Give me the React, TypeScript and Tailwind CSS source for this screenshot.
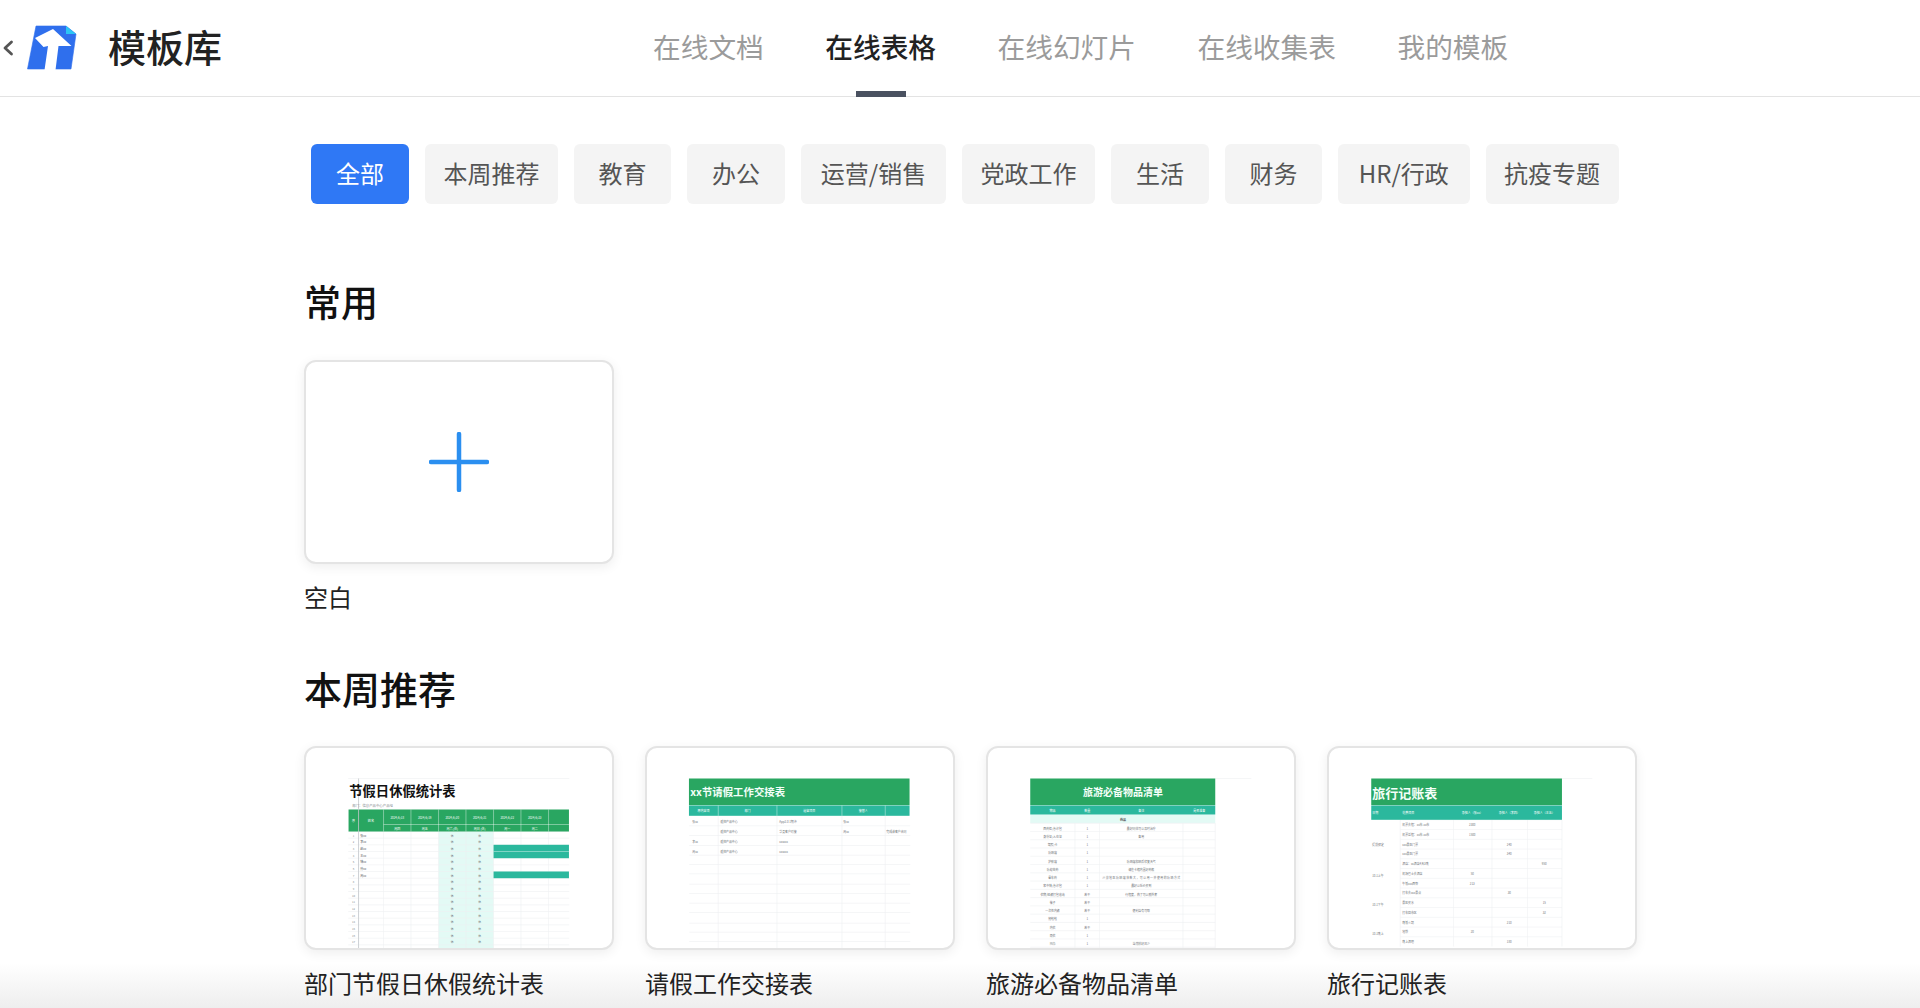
import type { ReactNode } from 'react';

const font = '[font-family:"Noto_Sans_CJK_SC","Liberation_Sans",sans-serif]';
const GREEN = '#29a661';
const TEAL = '#2bb89d';
const MINT = '#e3faf5';
const GRID = '#eef0f2';
const TINY = '#8a8f94';
const rows = (from: number, step: number, n: number) => Array.from({ length: n }, (_, i) => from + step * i);

const tabs = ['在线文档', '在线表格', '在线幻灯片', '在线收集表', '我的模板'];
const pills = [
  { label: '全部', w: 'w-[98px]' },
  { label: '本周推荐', w: 'w-[133px]' },
  { label: '教育', w: 'w-[97px]' },
  { label: '办公', w: 'w-[98px]' },
  { label: '运营/销售', w: 'w-[145px]' },
  { label: '党政工作', w: 'w-[133px]' },
  { label: '生活', w: 'w-[98px]' },
  { label: '财务', w: 'w-[97px]' },
  { label: 'HR/行政', w: 'w-[131.5px]' },
  { label: '抗疫专题', w: 'w-[133px]' },
];

function Thumb({ children }: { children: ReactNode }) {
  return (
    <svg viewBox="0 0 305 200" className="h-full w-full" style={{ fontFamily: '"Noto Sans CJK SC", sans-serif' }}>
      <g transform="translate(-2 -1.5)">{children}</g>
    </svg>
  );
}

function Lines({ xs, ys, top, bottom, x1, x2 }: { xs: number[]; ys: number[]; top: number; bottom: number; x1: number; x2: number }) {
  return (
    <g stroke={GRID} strokeWidth="0.6">
      {ys.map((y) => <line key={y} x1={x1} x2={x2} y1={y} y2={y} />)}
      {xs.map((x) => <line key={x} x1={x} x2={x} y1={top} y2={bottom} />)}
    </g>
  );
}

function HolidayThumb() {
  const cols = [79.3, 106.7, 134.3, 161.7, 189.3, 216.7, 244.3];
  const dates = ['2024/6/18', '2024/6/19', '2024/6/20', '2024/6/21', '2024/6/22', '2024/6/23', '2024/6/24'];
  const days = ['周四', '周五', '周六 (休)', '周日 (休)', '周一', '周二', '周三'];
  const names = ['张xx', '李xx', '赵xx', '王xx', '钱xx', '孙xx', '周xx'];
  const ys = rows(85, 6.67, 18);
  return (
    <Thumb>
      <line x1="44" x2="265" y1="32" y2="32" stroke={GRID} strokeWidth="0.6" />
      <rect x="134.3" y="85" width="55" height="119" fill={MINT} />
      <Lines xs={[54.3, ...cols]} ys={ys} top={85} bottom={204} x1={44} x2={265} />
      <rect x="189.3" y="98.3" width="75.4" height="13.4" fill={TEAL} />
      <rect x="189.3" y="125" width="75.4" height="6.7" fill={TEAL} />
      <line x1="189.3" x2="264.7" y1="105" y2="105" stroke="#ffffff" strokeWidth="0.4" />
      <rect x="44.3" y="63" width="220.4" height="22" fill={GREEN} />
      <line x1="54.3" x2="54.3" y1="32" y2="204" stroke="#c4c8cc" strokeWidth="0.8" />
      <text x="45" y="49" fontSize="13.3" fontWeight="700" fill="#111">节假日休假统计表</text>
      <text x="48" y="60.5" fontSize="3.4" fill={TINY}>部门：信息产品中心产品组</text>
      <text x="49.3" y="75" fontSize="3" fill="#fff" textAnchor="middle">序</text>
      <text x="66.8" y="75" fontSize="3.2" fill="#fff" textAnchor="middle">姓名</text>
      <line x1="79.3" x2="264.7" y1="78" y2="78" stroke="#fff" strokeWidth="0.4" />
      {cols.map((x, i) => (
        <g key={x}>
          <line x1={x} x2={x} y1="63" y2="85" stroke="#fff" strokeWidth="0.4" />
          {x + 13.7 < 258 && <text x={x + 13.7} y="72" fontSize="2.9" fill="#fff" textAnchor="middle">{dates[i]}</text>}
          {x + 13.7 < 258 && <text x={x + 13.7} y="83" fontSize="3" fill="#fff" textAnchor="middle">{days[i]}</text>}
        </g>
      ))}
      {/* last row is cut by the card edge, so no text in it */}
      {ys.slice(0, 17).map((y, i) => (
        <g key={y}>
          <text x="49.3" y={y + 5} fontSize="2.8" fill={TINY} textAnchor="middle">{i + 1}</text>
          {names[i] && <text x="56" y={y + 5} fontSize="3" fill="#55595d">{names[i]}</text>}
          <text x="148" y={y + 5} fontSize="2.8" fill="#6f7478" textAnchor="middle">休</text>
          <text x="175.5" y={y + 5} fontSize="2.8" fill="#6f7478" textAnchor="middle">休</text>
        </g>
      ))}
    </Thumb>
  );
}

function HandoverThumb() {
  const xs = [73, 131.7, 196.7, 240];
  const ys = [79.3, 89, 99, 108.7, 118, 127.3, 137.7, 147, 156.7, 166, 176.7, 185.7, 195];
  const heads = [['原内容项', 58.3], ['部门', 102.3], ['遗留项目', 164], ['接替人', 218]] as const;
  const data = [
    ['张xx', 47, 76.5], ['遥控产品中心', 75, 76.5], ['App2.0 1期冲', 134, 76.5], ['张xx', 198, 76.5],
    ['遥控产品中心', 75, 86.5], ['华夏客户对接', 134, 86.5], ['周xx', 198, 86.5], ['完成该客户合同', 241, 86.5],
    ['李xx', 47, 96.5], ['遥控产品中心', 75, 96.5], ['xxxxxx', 134, 96.5],
    ['周xx', 47, 106], ['遥控产品中心', 75, 106], ['xxxxxx', 134, 106],
  ] as const;
  return (
    <Thumb>
      <Lines xs={xs} ys={ys} top={69} bottom={204} x1={44} x2={265} />
      <rect x="43.7" y="32" width="220.6" height="26.7" fill={GREEN} />
      <rect x="43.7" y="59" width="220.6" height="10.3" fill={TEAL} />
      {xs.map((x) => <line key={x} x1={x} x2={x} y1="59" y2="69.3" stroke="#fff" strokeWidth="0.4" />)}
      <text x="45" y="49" fontSize="10.4" fontWeight="700" fill="#f4fff9">xx节请假工作交接表</text>
      {heads.map(([t, x]) => <text key={t} x={x} y="65.5" fontSize="3" fill="#fff" textAnchor="middle">{t}</text>)}
      {data.map(([t, x, y], i) => <text key={i} x={x} y={y} fontSize="2.9" fill="#6f7478">{t}</text>)}
    </Thumb>
  );
}

function TravelListThumb() {
  const xs = [88.7, 113.3, 196.7, 229];
  const ys = rows(76.7, 8.27, 16);
  const items = [
    ['西药柜/急诊包', '1', '最好同伴可以及时治疗'], ['身份证/入住证', '1', '备用'], ['驾照/卡', '1', ''], ['防晒霜', '1', ''],
    ['护肤霜', '1', '防晒霜和晒后修复天气'], ['防蚊虫药', '1', '请在卡箱内置好药瓶'], ['晕车药', '1', '沙漠地区防晒霜倍数大，可以用一并使用的防晒方式'],
    ['家中钱/急诊包', '1', '最好以低价买到'], ['衣物/短裤打包收纳', '若干', '行程度，热了可以脱外套'], ['袜子', '若干', ''],
    ['一次性内裤', '若干', '便利店有可取'], ['拖鞋鞋', '1', ''], ['内衣', '若干', ''], ['雨衣', '1', ''], ['围巾', '1', '当然较好风少'],
  ];
  return (
    <Thumb>
      <line x1="229" x2="265" y1="32" y2="32" stroke={GRID} strokeWidth="0.6" />
      <rect x="44" y="68" width="185" height="8.7" fill={MINT} />
      <Lines xs={xs} ys={ys} top={76.7} bottom={204} x1={44} x2={229} />
      <rect x="44" y="32" width="185" height="26.7" fill={GREEN} />
      <rect x="44" y="59" width="185" height="9" fill={TEAL} />
      <text x="136.7" y="49" fontSize="10" fontWeight="700" fill="#f4fff9" textAnchor="middle">旅游必备物品清单</text>
      {[['物品', 66.3], ['数量', 101], ['备注', 155], ['是否准备', 213]].map(([t, x]) => (
        <text key={t} x={x} y="65" fontSize="3" fill="#fff" textAnchor="middle">{t}</text>
      ))}
      <text x="136.7" y="74.3" fontSize="3" fontWeight="700" fill="#333" textAnchor="middle">药品</text>
      {items.map(([a, b, c], i) => (
        <g key={a} fontSize="2.9" fill="#6f7478" textAnchor="middle">
          <text x="66.3" y={83 + i * 8.27}>{a}</text>
          <text x="101" y={83 + i * 8.27}>{b}</text>
          <text x="155" y={83 + i * 8.27} textLength={c.length > 20 ? 78 : undefined}>{c}</text>
        </g>
      ))}
    </Thumb>
  );
}

function ExpenseThumb() {
  const xs = [73, 126.3, 164.7, 200.3, 234.7];
  const ys = rows(73.3, 9.75, 13);
  const items: [string, string, number][] = [
    ['机票去程：xx市-xx市', '2300', 145], ['机票返程：xx市-xx市', '1500', 145], ['xxx景区门票', '240', 182], ['xxx景区门票', '340', 182],
    ['酒店：xx酒店4天3晚', '950', 217], ['机场巴士去酒店', '50', 145], ['午饭xxx西餐', '213', 145], ['打车去xxx景点', '30', 182],
    ['景区买水', '15', 217], ['打车回市区', '32', 217], ['晚饭火锅', '210', 182], ['地铁', '20', 145], ['晚上酒吧', '180', 182],
  ];
  return (
    <Thumb>
      <line x1="234.7" x2="265" y1="32" y2="32" stroke={GRID} strokeWidth="0.6" />
      <Lines xs={xs} ys={ys} top={73.3} bottom={200} x1={73} x2={234.7} />
      <rect x="44" y="32" width="190.7" height="26.7" fill={GREEN} />
      <rect x="44" y="59" width="190.7" height="14.3" fill={TEAL} />
      <text x="45" y="51" fontSize="13" fontWeight="700" fill="#f4fff9">旅行记账表</text>
      <g fontSize="3" fill="#fff">
        <text x="45" y="67.5">日期</text>
        <text x="75" y="67.5">花费项目</text>
        <text x="145" y="67.5" textAnchor="middle">承担人（张xx）</text>
        <text x="182" y="67.5" textAnchor="middle">承担人（李四）</text>
        <text x="217" y="67.5" textAnchor="middle">承担人（王五）</text>
      </g>
      {items.map(([a, b, x], i) => (
        <g key={a + i} fontSize="2.9" fill="#6f7478">
          <text x="75" y={79.5 + i * 9.75}>{a}</text>
          <text x={x} y={79.5 + i * 9.75} textAnchor="middle">{b}</text>
        </g>
      ))}
      <g fontSize="2.9" fill="#6f7478">
        <text x="45" y="99">提前预定</text>
        <text x="45" y="130">10.1上午</text>
        <text x="45" y="159">10.1下午</text>
        <text x="45" y="188">10.1晚上</text>
      </g>
    </Thumb>
  );
}

function Card({ label, children }: { label: string; children: ReactNode }) {
  return (
    <div className="w-[309.5px] shrink-0">
      <div className="flex h-[204px] items-center justify-center overflow-hidden rounded-[12px] border-2 border-[#e4e4e4] bg-white shadow-[0_3px_12px_rgba(0,0,0,0.07)]">
        {children}
      </div>
      <div className="mt-[16px] h-[34px] text-[24px] leading-[34px] text-[#222]">{label}</div>
    </div>
  );
}

export default function App() {
  return (
    <div className={`relative h-[1008px] w-full overflow-hidden bg-white ${font}`}>
      {/* bottom fade, sits behind the labels */}
      <div className="pointer-events-none absolute inset-x-0 bottom-0 h-[45px] bg-gradient-to-b from-transparent to-[#eeeeee]" />

      <header className="relative flex h-[97px] items-center border-b border-[#e3e3e3]">
        <div className="flex w-[653px] shrink-0 items-center">
          <svg width="12" height="16" viewBox="0 0 12 16" fill="none" className="ml-[2px]">
            <path d="M9.500 2 3 8l6.500 6" stroke="#555" strokeWidth="2.800" strokeLinecap="round" strokeLinejoin="round" />
          </svg>
          {/* logo */}
          <svg width="52" height="46" viewBox="26 25 52 46" className="ml-[12px]">
            <path d="M36 26h30l10 8-5 35H27.500z" fill="#2f6fed" stroke="#2f6fed" strokeWidth="0.6" strokeLinejoin="round" />
            <path d="M66 26l10 8H66z" fill="#2cc5f5" />
            <path d="M53 29 35 38l8.500 9 4.500-1-3.500 24h11l3-24h13z" fill="#fff" />
          </svg>
          <h1 className="mb-[4px] ml-[30px] text-[38px] font-medium leading-none text-[#222]">模板库</h1>
        </div>
        <nav className="flex h-full items-center gap-[61.5px]">
          {tabs.map((tab) => {
            const active = tab === '在线表格';
            return (
              <div
                key={tab}
                className={`relative flex h-full items-center pb-[3px] text-[27.7px] ${active ? 'font-medium text-[#222]' : 'text-[#9b9b9b]'}`}
              >
                {tab}
                {active && <span className="absolute -bottom-px left-1/2 h-[6px] w-[50px] -translate-x-1/2 bg-[#4a5160]" />}
              </div>
            );
          })}
        </nav>
      </header>

      <main className="relative pl-[304px]">
        <div className="ml-[7px] flex gap-[16px] pt-[47px]">
          {pills.map((p, i) => (
            <div
              key={p.label}
              className={`flex h-[60px] items-center justify-center rounded-[6px] pb-[2px] text-[24px] ${p.w} ${
                i === 0 ? 'bg-[#2f78f5] text-white' : 'bg-[#f4f4f4] text-[#555]'
              }`}
            >
              {p.label}
            </div>
          ))}
        </div>

        <h2 className="mt-[75px] h-[44px] text-[37px] font-medium leading-[44px] text-[#111]">常用</h2>
        <div className="mt-[37px] flex">
          <Card label="空白">
            <svg width="60" height="60" viewBox="0 0 60 60">
              <path d="M30 2v56M2 30h56" stroke="#2b8ff0" strokeWidth="4.500" strokeLinecap="round" />
            </svg>
          </Card>
        </div>

        <h2 className="mt-[52px] h-[44px] text-[38px] font-medium leading-[44px] text-[#111]">本周推荐</h2>
        <div className="mt-[36px] flex gap-[31.5px]">
          <Card label="部门节假日休假统计表"><HolidayThumb /></Card>
          <Card label="请假工作交接表"><HandoverThumb /></Card>
          <Card label="旅游必备物品清单"><TravelListThumb /></Card>
          <Card label="旅行记账表"><ExpenseThumb /></Card>
        </div>
      </main>
    </div>
  );
}
